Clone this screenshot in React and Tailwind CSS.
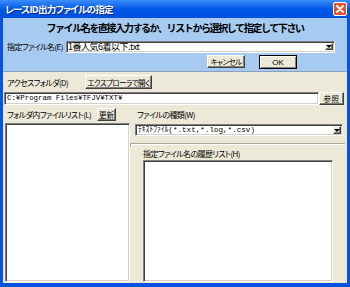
import React from 'react'

const raised =
  'bg-[#ece9d8] border border-t-white border-l-white border-b-[#404040] border-r-[#404040] shadow-[inset_-1px_-1px_0_#808080] flex items-center justify-center overflow-hidden'
const sunken =
  'bg-white border border-t-[#808080] border-l-[#808080] border-b-white border-r-white shadow-[inset_1px_1px_0_#404040,inset_-1px_-1px_0_#d4d0c8]'

const Arrow = ({ className }) => (
  <div className={`${raised} ${className}`}>
    <div className="w-0 h-0 border-l-[3px] border-r-[3px] border-t-[3px] border-l-transparent border-r-transparent border-t-black" />
  </div>
)

const Label = ({ children, className = '' }) => (
  <span className={`text-[8px] leading-[11px] text-black whitespace-nowrap tracking-[-0.6px] [font-feature-settings:'palt'] ${className}`}>
    {children}
  </span>
)

export default function App() {
  return (
    <div
      className="w-[350px] h-[287px] flex flex-col bg-[#0853e0] overflow-hidden"
      style={{ fontFamily: '"Noto Sans CJK JP", "Noto Sans", sans-serif' }}
    >
      {/* Title bar */}
      <div className="h-[18px] flex items-center justify-between pl-[5px] pr-[3px] bg-gradient-to-b from-[#3a8df9] via-[#0058e8] to-[#0050da]">
        <span className="text-white font-bold text-[9.5px] leading-[12px] tracking-[-0.7px] [text-shadow:1px_1px_0_#0a2a80] [font-feature-settings:'palt']">
          レースID出力ファイルの指定
        </span>
        <div className="w-[14px] h-[14px] rounded-[2px] border border-white bg-[#e0552f] flex items-center justify-center">
          <svg width="8" height="8" viewBox="0 0 8 8">
            <path d="M1 1L7 7M7 1L1 7" stroke="white" strokeWidth="1.8" strokeLinecap="round" />
          </svg>
        </div>
      </div>

      {/* Body */}
      <div className="flex-1 flex flex-col mx-[3px] mb-[4px]">
        {/* Blue panel */}
        <div className="h-[54px] bg-[#a6caf0] border-b border-[#8aa0bc] flex flex-col">
          <div className="pt-[4px] h-[18px] text-center text-[10px] font-bold leading-[12px] tracking-[-1.4px] text-black">
            ファイル名を直接入力するか、リストから選択して指定して下さい
          </div>
          <div className="mt-[4px] h-[13px] flex items-center">
            <div className="w-[63px] pl-[4px] flex items-center">
              <Label>指定ファイル名(E)</Label>
            </div>
            <div className={`${sunken} w-[269px] h-[12px] flex items-center justify-between pl-[1px] pr-[1px]`}>
              <span className="text-[9px] leading-[10px] tracking-[-0.5px] [font-feature-settings:'palt']">1番人気6着以下.txt</span>
              <Arrow className="w-[8px] h-[7px]" />
            </div>
          </div>
          <div className="mt-[2px] flex items-start pl-[204px]">
            <div className={`${raised} w-[38px] h-[13px]`}>
              <span className="text-[7.5px] leading-[9px] tracking-[-0.6px] [font-feature-settings:'palt']">キャンセル</span>
            </div>
            <div className="ml-[14px] w-[38px] h-[14px] border border-black bg-[#ece9d8] shadow-[inset_1px_1px_0_#fff,inset_-1px_-1px_0_#808080] flex items-center justify-center">
              <span className="text-[8px] leading-[9px]" style={{ fontFamily: '"Liberation Sans", sans-serif' }}>OK</span>
            </div>
          </div>
        </div>

        {/* Beige area */}
        <div className="flex-1 bg-[#ece9d8] flex flex-col">
          <div className="pt-[3px] flex items-center">
            <div className="w-[82px] pl-[4px] flex items-center">
              <Label>アクセスフォルダ(D)</Label>
            </div>
            <div className={`${raised} w-[67px] h-[14px]`}>
              <span className="text-[7.5px] leading-[9px] tracking-[-0.6px] whitespace-nowrap [font-feature-settings:'palt']">エクスプローラで開く</span>
            </div>
          </div>

          <div className="mt-[3px] flex items-start">
            <div className={`${sunken} ml-[1px] w-[315px] h-[13px] flex items-center pl-[2px]`}>
              <span className="text-[7.4px] leading-[9px] whitespace-nowrap" style={{ fontFamily: '"Liberation Mono", monospace' }}>
                C:¥Program Files¥TFJV¥TXT¥
              </span>
            </div>
            <div className={`${raised} w-[25px] h-[13px]`}>
              <span className="text-[7.5px] leading-[9px] tracking-[0.5px]">参照</span>
            </div>
          </div>

          <div className="flex-1 flex">
            {/* Left column */}
            <div className="w-[127px] flex flex-col">
              <div className="mt-[2px] h-[14px] flex items-center">
                <div className="w-[94px] pl-[4px] flex items-center">
                  <Label>フォルダ内ファイルリスト(L)</Label>
                </div>
                <div className={`${raised} w-[19px] h-[13px]`}>
                  <span className="text-[7.5px] leading-[9px]">更新</span>
                </div>
              </div>
              <div className={`${sunken} mt-[2px] ml-[2px] mb-[1px] flex-1`} />
            </div>

            {/* Right column */}
            <div className="flex-1 flex flex-col">
              <div className="mt-[2px] h-[14px] flex items-center pl-[7px]">
                <Label>ファイルの種類(W)</Label>
              </div>
              <div className={`${sunken} mt-[3px] ml-[5px] w-[208px] h-[12px] flex items-center justify-between pl-[2px] pr-[1px]`}>
                <span className="text-[7.6px] leading-[9px] whitespace-nowrap" style={{ fontFamily: '"Liberation Mono", "Noto Sans CJK JP", monospace' }}>
                  ﾃｷｽﾄﾌｧｲﾙ(*.txt,*.log,*.csv)
                </span>
                <Arrow className="w-[8px] h-[8px]" />
              </div>
              <div className="mt-[7px] ml-[0px] mr-[2px] h-[4px] border-t border-l border-t-[#aca899] border-l-[#aca899] shadow-[inset_1px_1px_0_#fff]" />
              <div className="h-[12px] flex items-center pl-[13px]">
                <Label>指定ファイル名の履歴リスト(H)</Label>
              </div>
              <div className={`${sunken} mt-[1px] ml-[13px] w-[190px] mb-[1px] flex-1`} />
            </div>
          </div>
        </div>
      </div>
    </div>
  )
}
